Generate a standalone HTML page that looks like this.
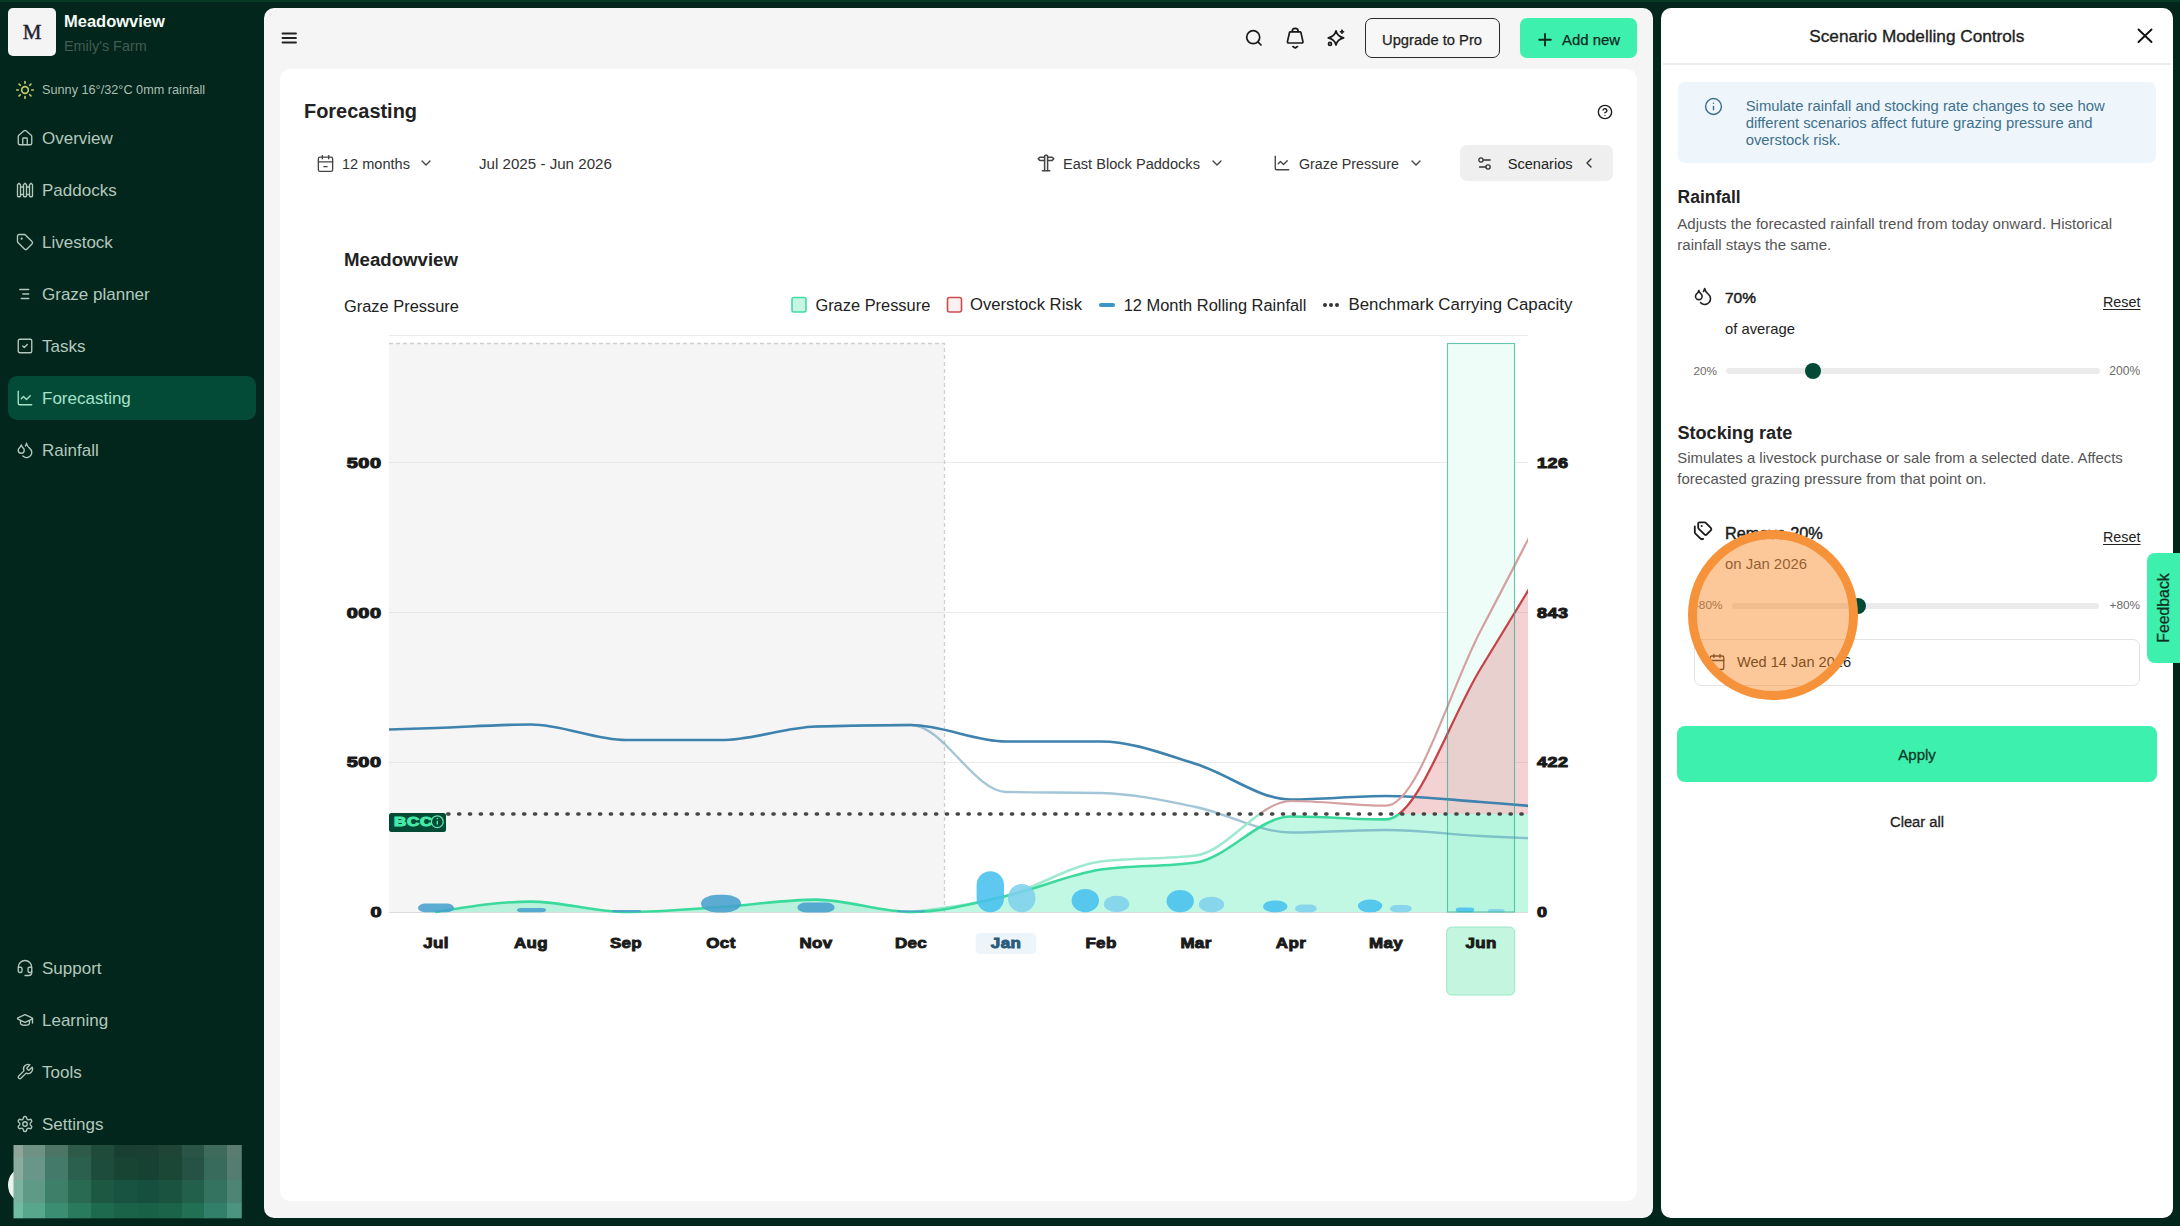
<!DOCTYPE html>
<html><head><meta charset="utf-8">
<style>
*{box-sizing:border-box;margin:0;padding:0}
html,body{width:2180px;height:1226px;overflow:hidden}
body{background:#02261b;font-family:"Liberation Sans",sans-serif;position:relative;color:#1f1f1f}
.a{position:absolute;white-space:nowrap;line-height:1}
svg{position:absolute;overflow:visible}
.nav{color:#b4c8be;font-size:17px}
.ic{stroke:#b4c8be;fill:none;stroke-width:1.5;stroke-linecap:round;stroke-linejoin:round}
.dk{stroke:#222;fill:none;stroke-width:1.7;stroke-linecap:round;stroke-linejoin:round}
</style></head><body>
<div class="a" style="left:0;top:0;width:2180px;height:2px;background:#073a22"></div>

<!-- SIDEBAR -->
<div class="a" style="left:8px;top:8px;width:48px;height:48px;background:#f5f4f4;border-radius:5px"></div>
<div class="a" style="left:8px;top:22px;width:48px;text-align:center;font-family:'Liberation Serif',serif;font-size:21px;color:#1d2030;-webkit-text-stroke:0.4px #1d2030">M</div>
<div class="a" style="left:64px;top:13px;font-size:16.5px;font-weight:bold;color:#f4fbf6">Meadowview</div>
<div class="a" style="left:64px;top:39px;font-size:14.4px;color:#445b51">Emily's Farm</div>
<svg style="left:15px;top:80px" width="20" height="20" viewBox="0 0 24 24"><g stroke="#c9c76a" stroke-width="2" fill="none" stroke-linecap="round"><circle cx="12" cy="12" r="4"/><path d="M12 2v2M12 20v2M4.93 4.93l1.41 1.41M17.66 17.66l1.41 1.41M2 12h2M20 12h2M6.34 17.66l-1.41 1.41M19.07 4.93l-1.41 1.41"/></g></svg>
<div class="a" style="left:42px;top:84px;font-size:12.7px;color:#a9bfb4">Sunny 16°/32°C 0mm rainfall</div>

<div class="a" style="left:8px;top:376px;width:248px;height:44px;background:#034b37;border-radius:9px"></div>

<div class="a nav" style="left:42px;top:130px">Overview</div>
<div class="a nav" style="left:42px;top:182px">Paddocks</div>
<div class="a nav" style="left:42px;top:234px">Livestock</div>
<div class="a nav" style="left:42px;top:286px">Graze planner</div>
<div class="a nav" style="left:42px;top:338px">Tasks</div>
<div class="a nav" style="left:42px;top:390px;color:#a9e2cb">Forecasting</div>
<div class="a nav" style="left:42px;top:442px">Rainfall</div>
<div class="a nav" style="left:42px;top:960px">Support</div>
<div class="a nav" style="left:42px;top:1012px">Learning</div>
<div class="a nav" style="left:42px;top:1064px">Tools</div>
<div class="a nav" style="left:42px;top:1116px">Settings</div>


<!-- sidebar icons -->
<svg style="left:16px;top:128.5px" width="18" height="18" viewBox="0 0 24 24"><g stroke="#b4c8be" fill="none" stroke-width="1.8" stroke-linecap="round" stroke-linejoin="round"><path d="M15 21v-8a1 1 0 0 0-1-1h-4a1 1 0 0 0-1 1v8"/><path d="M3 10a2 2 0 0 1 .709-1.528l7-5.999a2 2 0 0 1 2.582 0l7 5.999A2 2 0 0 1 21 10v9a2 2 0 0 1-2 2H5a2 2 0 0 1-2-2z"/></g></svg>
<svg style="left:16px;top:180.5px" width="18" height="18" viewBox="0 0 24 24"><g stroke="#b4c8be" fill="none" stroke-width="1.8" stroke-linecap="round" stroke-linejoin="round"><path d="M4 3 2 5v15c0 .6.4 1 1 1h2c.6 0 1-.4 1-1V5Z"/><path d="M6 8h4"/><path d="M6 18h4"/><path d="m12 3-2 2v15c0 .6.4 1 1 1h2c.6 0 1-.4 1-1V5Z"/><path d="M14 8h4"/><path d="M14 18h4"/><path d="m20 3-2 2v15c0 .6.4 1 1 1h2c.6 0 1-.4 1-1V5Z"/></g></svg>
<svg style="left:16px;top:232.5px" width="18" height="18" viewBox="0 0 24 24"><g stroke="#b4c8be" fill="none" stroke-width="1.8" stroke-linecap="round" stroke-linejoin="round"><path d="M12.586 2.586A2 2 0 0 0 11.172 2H4a2 2 0 0 0-2 2v7.172a2 2 0 0 0 .586 1.414l8.704 8.704a2.426 2.426 0 0 0 3.42 0l6.58-6.58a2.426 2.426 0 0 0 0-3.42z"/><circle cx="7.5" cy="7.5" r=".6"/></g></svg>
<svg style="left:16px;top:284.5px" width="18" height="18" viewBox="0 0 24 24"><g stroke="#b4c8be" fill="none" stroke-width="1.8" stroke-linecap="round" stroke-linejoin="round"><path d="M5 6h12"/><path d="M9 12h8"/><path d="M7 18h10"/></g></svg>
<svg style="left:16px;top:336.5px" width="18" height="18" viewBox="0 0 24 24"><g stroke="#b4c8be" fill="none" stroke-width="1.8" stroke-linecap="round" stroke-linejoin="round"><rect x="3" y="3" width="18" height="18" rx="2"/><path d="m9 12 2 2 4-4"/></g></svg>
<svg style="left:16px;top:388.5px" width="18" height="18" viewBox="0 0 24 24"><g stroke="#a9e2cb" fill="none" stroke-width="1.8" stroke-linecap="round" stroke-linejoin="round"><path d="M3 3v16a2 2 0 0 0 2 2h16"/><path d="m19 9-5 5-4-4-3 3"/></g></svg>
<svg style="left:16px;top:440.5px" width="18" height="18" viewBox="0 0 24 24"><g stroke="#b4c8be" fill="none" stroke-width="1.8" stroke-linecap="round" stroke-linejoin="round"><path d="M7 16.3c2.2 0 4-1.83 4-4.05 0-1.16-.57-2.26-1.71-3.19S7.290 6.75 7 5.3c-.29 1.45-1.14 2.84-2.29 3.760S3 11.1 3 12.25c0 2.22 1.8 4.05 4 4.05z"/><path d="M12.56 6.6A10.97 10.97 0 0 0 14 3.02c.5 2.5 2 4.9 4 6.5s3 3.5 3 5.5a6.98 6.98 0 0 1-11.91 4.97"/></g></svg>
<svg style="left:16px;top:958.5px" width="18" height="18" viewBox="0 0 24 24"><g stroke="#b4c8be" fill="none" stroke-width="1.8" stroke-linecap="round" stroke-linejoin="round"><path d="M3 11h3a2 2 0 0 1 2 2v3a2 2 0 0 1-2 2H5a2 2 0 0 1-2-2v-5Zm0 0a9 9 0 1 1 18 0m0 0v5a2 2 0 0 1-2 2h-1a2 2 0 0 1-2-2v-3a2 2 0 0 1 2-2h3Z"/><path d="M21 16v2a4 4 0 0 1-4 4h-5"/></g></svg>
<svg style="left:16px;top:1010.5px" width="18" height="18" viewBox="0 0 24 24"><g stroke="#b4c8be" fill="none" stroke-width="1.8" stroke-linecap="round" stroke-linejoin="round"><path d="M21.42 10.922a1 1 0 0 0-.019-1.838L12.83 5.18a2 2 0 0 0-1.66 0L2.6 9.08a1 1 0 0 0 0 1.832l8.57 3.908a2 2 0 0 0 1.66 0z"/><path d="M22 10v6"/><path d="M6 12.5V16a6 3 0 0 0 12 0v-3.5"/></g></svg>
<svg style="left:16px;top:1062.5px" width="18" height="18" viewBox="0 0 24 24"><g stroke="#b4c8be" fill="none" stroke-width="1.8" stroke-linecap="round" stroke-linejoin="round"><path d="M14.7 6.3a1 1 0 0 0 0 1.4l1.6 1.6a1 1 0 0 0 1.4 0l3.77-3.77a6 6 0 0 1-7.94 7.940l-6.91 6.91a2.12 2.12 0 0 1-3-3l6.91-6.91a6 6 0 0 1 7.94-7.94l-3.76 3.76z"/></g></svg>
<svg style="left:16px;top:1114.5px" width="18" height="18" viewBox="0 0 24 24"><g stroke="#b4c8be" fill="none" stroke-width="1.8" stroke-linecap="round" stroke-linejoin="round"><path d="M12.22 2h-.44a2 2 0 0 0-2 2v.18a2 2 0 0 1-1 1.73l-.43.25a2 2 0 0 1-2 0l-.15-.08a2 2 0 0 0-2.730.73l-.22.38a2 2 0 0 0 .73 2.73l.15.1a2 2 0 0 1 1 1.72v.51a2 2 0 0 1-1 1.74l-.15.09a2 2 0 0 0-.73 2.73l.22.38a2 2 0 0 0 2.73.73l.15-.08a2 2 0 0 1 2 0l.43.25a2 2 0 0 1 1 1.73V20a2 2 0 0 0 2 2h.44a2 2 0 0 0 2-2v-.18a2 2 0 0 1 1-1.73l.43-.25a2 2 0 0 1 2 0l.15.08a2 2 0 0 0 2.73-.73l.22-.39a2 2 0 0 0-.73-2.73l-.15-.08a2 2 0 0 1-1-1.74v-.5a2 2 0 0 1 1-1.74l.15-.09a2 2 0 0 0 .73-2.73l-.22-.38a2 2 0 0 0-2.73-.73l-.15.08a2 2 0 0 1-2 0l-.43-.25a2 2 0 0 1-1-1.73V4a2 2 0 0 0-2-2z"/><circle cx="12" cy="12" r="3"/></g></svg>
<div class="a" style="left:8px;top:1168px;width:30px;height:34px;border-radius:50%;background:#eef2ef"></div>
<svg style="left:0;top:0" width="2180" height="1226"><rect x="13.5" y="1145" width="9.8" height="12.3" fill="#8fa59a"/><rect x="23" y="1145" width="22.3" height="12.3" fill="#6d9283"/><rect x="45" y="1145" width="23.3" height="12.3" fill="#4c7566"/><rect x="68" y="1145" width="23.8" height="12.3" fill="#2e5a4a"/><rect x="91.5" y="1145" width="22.8" height="12.3" fill="#1f4b3b"/><rect x="114" y="1145" width="23.3" height="12.3" fill="#193f33"/><rect x="137" y="1145" width="22.3" height="12.3" fill="#1a4034"/><rect x="159" y="1145" width="23.3" height="12.3" fill="#1f4537"/><rect x="182" y="1145" width="22.3" height="12.3" fill="#2a5446"/><rect x="204" y="1145" width="23.3" height="12.3" fill="#3f6b5c"/><rect x="227" y="1145" width="14.8" height="12.3" fill="#5a7d71"/><rect x="13.5" y="1157" width="9.8" height="23.3" fill="#8aab9d"/><rect x="23" y="1157" width="22.3" height="23.3" fill="#68978a"/><rect x="45" y="1157" width="23.3" height="23.3" fill="#437a69"/><rect x="68" y="1157" width="23.8" height="23.3" fill="#2b5f4e"/><rect x="91.5" y="1157" width="22.8" height="23.3" fill="#1e4c3c"/><rect x="114" y="1157" width="23.3" height="23.3" fill="#184434"/><rect x="137" y="1157" width="22.3" height="23.3" fill="#174233"/><rect x="159" y="1157" width="23.3" height="23.3" fill="#1b4737"/><rect x="182" y="1157" width="22.3" height="23.3" fill="#255244"/><rect x="204" y="1157" width="23.3" height="23.3" fill="#386b5b"/><rect x="227" y="1157" width="14.8" height="23.3" fill="#547c70"/><rect x="13.5" y="1180" width="9.8" height="23.3" fill="#7cb2a0"/><rect x="23" y="1180" width="22.3" height="23.3" fill="#5f9a86"/><rect x="45" y="1180" width="23.3" height="23.3" fill="#3e7f69"/><rect x="68" y="1180" width="23.8" height="23.3" fill="#2a6a53"/><rect x="91.5" y="1180" width="22.8" height="23.3" fill="#1d5843"/><rect x="114" y="1180" width="23.3" height="23.3" fill="#185240"/><rect x="137" y="1180" width="22.3" height="23.3" fill="#174f3e"/><rect x="159" y="1180" width="23.3" height="23.3" fill="#1a5441"/><rect x="182" y="1180" width="22.3" height="23.3" fill="#22604b"/><rect x="204" y="1180" width="23.3" height="23.3" fill="#337360"/><rect x="227" y="1180" width="14.8" height="23.3" fill="#4d8474"/><rect x="13.5" y="1203" width="9.8" height="15.3" fill="#6fbca3"/><rect x="23" y="1203" width="22.3" height="15.3" fill="#58a68c"/><rect x="45" y="1203" width="23.3" height="15.3" fill="#3b8e72"/><rect x="68" y="1203" width="23.8" height="15.3" fill="#2a7a5d"/><rect x="91.5" y="1203" width="22.8" height="15.3" fill="#1e6a4f"/><rect x="114" y="1203" width="23.3" height="15.3" fill="#1a6248"/><rect x="137" y="1203" width="22.3" height="15.3" fill="#186046"/><rect x="159" y="1203" width="23.3" height="15.3" fill="#1b6449"/><rect x="182" y="1203" width="22.3" height="15.3" fill="#227054"/><rect x="204" y="1203" width="23.3" height="15.3" fill="#32806a"/><rect x="227" y="1203" width="14.8" height="15.3" fill="#4a9480"/></svg>

<!-- MAIN PANEL -->
<div class="a" style="left:264px;top:8px;width:1389px;height:1210px;background:#f5f5f5;border-radius:10px"></div>
<div class="a" style="left:280px;top:69px;width:1357px;height:1132px;background:#fff;border-radius:10px"></div>

<!-- CHART_START -->
<div class="a" style="left:344px;top:250.8px;font-size:18.65px;font-weight:bold;color:#222">Meadowview</div>
<div class="a" style="left:344px;top:297.6px;font-size:16.42px;color:#222">Graze Pressure</div>
<div class="a" style="left:815.4px;top:297.4px;font-size:16.42px;color:#222">Graze Pressure</div>
<div class="a" style="left:970px;top:297.2px;font-size:16.66px;color:#222">Overstock Risk</div>
<div class="a" style="left:1123.7px;top:297.4px;font-size:16.46px;color:#222">12 Month Rolling Rainfall</div>
<div class="a" style="left:1348.4px;top:297.0px;font-size:16.86px;color:#222">Benchmark Carrying Capacity</div>
<svg style="left:0;top:0" width="2180" height="1226">
<defs><clipPath id="plot"><rect x="389" y="300" width="1139" height="620"/></clipPath><clipPath id="below"><rect x="380" y="814" width="1160" height="110"/></clipPath><clipPath id="above"><rect x="380" y="300" width="1160" height="514"/></clipPath></defs>
<rect x="792" y="297.5" width="14" height="14.5" rx="2" fill="#c6f6e1" stroke="#3fdca3" stroke-width="1.6"/><rect x="947.5" y="297.5" width="14" height="14.5" rx="2" fill="#fdf0f0" stroke="#c94b4f" stroke-width="1.6"/><path d="M1101 305h12" stroke="#3d95c6" stroke-width="4.2" stroke-linecap="round"/><g fill="#333"><circle cx="1325" cy="305" r="2"/><circle cx="1331" cy="305" r="2"/><circle cx="1337" cy="305" r="2"/></g>
<path d="M389 335.5H1528" stroke="#ebebeb" stroke-width="1"/><path d="M389 462.5H1528" stroke="#ebebeb" stroke-width="1"/><path d="M389 612.5H1528" stroke="#ebebeb" stroke-width="1"/><path d="M389 762.5H1528" stroke="#ebebeb" stroke-width="1"/><rect x="389" y="343" width="555" height="569" fill="#f5f5f5"/><path d="M389 343.5H944.5V912" fill="none" stroke="#cfcfcf" stroke-width="1.3" stroke-dasharray="4 3"/><path d="M389 462.5H944" stroke="#e6e6e6" stroke-width="1"/><path d="M389 612.5H944" stroke="#e6e6e6" stroke-width="1"/><path d="M389 762.5H944" stroke="#e6e6e6" stroke-width="1"/><rect x="1447.5" y="343.5" width="67" height="568.5" fill="#effdf8"/>
<g clip-path="url(#plot)"><g clip-path="url(#below)"><path d="M436.0,912.0 C467.7,906.8 499.3,901.6 531.0,901.6 C562.7,901.6 594.3,912.0 626.0,912.0 C657.7,912.0 689.3,909.1 721.0,907.0 C752.7,904.9 784.3,899.6 816.0,899.6 C847.7,899.6 879.3,912.0 911.0,912.0 C942.7,912.0 974.3,903.1 1006.0,896.0 C1037.7,888.9 1069.3,874.2 1101.0,869.5 C1132.7,864.8 1164.3,867.2 1196.0,862.5 C1227.7,857.8 1259.3,816.5 1291.0,816.5 C1322.7,816.5 1354.3,819.4 1386.0,819.4 C1417.7,819.4 1449.3,719.2 1481.0,668.0 C1512.7,616.8 1544.3,564.4 1576.0,512.0 L1576,912 L436,912Z" fill="rgba(62,232,170,0.32)"/></g><g clip-path="url(#above)"><path d="M436.0,912.0 C467.7,906.8 499.3,901.6 531.0,901.6 C562.7,901.6 594.3,912.0 626.0,912.0 C657.7,912.0 689.3,909.1 721.0,907.0 C752.7,904.9 784.3,899.6 816.0,899.6 C847.7,899.6 879.3,912.0 911.0,912.0 C942.7,912.0 974.3,903.1 1006.0,896.0 C1037.7,888.9 1069.3,874.2 1101.0,869.5 C1132.7,864.8 1164.3,867.2 1196.0,862.5 C1227.7,857.8 1259.3,816.5 1291.0,816.5 C1322.7,816.5 1354.3,819.4 1386.0,819.4 C1417.7,819.4 1449.3,719.2 1481.0,668.0 C1512.7,616.8 1544.3,564.4 1576.0,512.0 L1576,912 L436,912Z" fill="rgba(210,75,85,0.25)"/></g></g>
<path d="M389 912.5H1528" stroke="#dcdcdc" stroke-width="1"/><g clip-path="url(#plot)" fill="none" stroke-linecap="round" stroke-linejoin="round"><path d="M816.0,726.5 C847.7,725.8 879.3,725.0 911.0,725.0 C942.7,725.0 974.3,791.3 1006.0,792.0 C1037.7,792.7 1069.3,792.3 1101.0,793.0 C1132.7,793.7 1164.3,800.4 1196.0,807.0 C1227.7,813.6 1259.3,832.5 1291.0,832.5 C1322.7,832.5 1354.3,830.0 1386.0,830.0 C1417.7,830.0 1449.3,834.3 1481.0,836.0 C1512.7,837.7 1544.3,838.8 1576.0,840.0" stroke="rgba(70,140,175,0.5)" stroke-width="2.3"/><path d="M341.0,731.0 C372.7,730.0 404.3,729.1 436.0,728.0 C467.7,726.9 499.3,724.5 531.0,724.5 C562.7,724.5 594.3,740.0 626.0,740.0 C657.7,740.0 689.3,740.0 721.0,740.0 C752.7,740.0 784.3,727.5 816.0,726.5 C847.7,725.5 879.3,725.0 911.0,725.0 C942.7,725.0 974.3,741.5 1006.0,741.5 C1037.7,741.5 1069.3,741.5 1101.0,741.5 C1132.7,741.5 1164.3,754.3 1196.0,764.0 C1227.7,773.7 1259.3,799.5 1291.0,799.5 C1322.7,799.5 1354.3,796.0 1386.0,796.0 C1417.7,796.0 1449.3,799.7 1481.0,802.0 C1512.7,804.3 1544.3,807.2 1576.0,810.0" stroke="#3d83ad" stroke-width="2.7"/><g clip-path="url(#below)"><path d="M911.0,912.0 C942.7,908.2 974.3,904.4 1006.0,896.0 C1037.7,887.6 1069.3,865.5 1101.0,861.5 C1132.7,857.5 1164.3,859.5 1196.0,855.5 C1227.7,851.5 1259.3,801.0 1291.0,801.0 C1322.7,801.0 1354.3,805.7 1386.0,805.7 C1417.7,805.7 1449.3,690.0 1481.0,630.0 C1512.7,570.0 1544.3,508.0 1576.0,446.0" stroke="#9eead0" stroke-width="2.6"/><path d="M436.0,912.0 C467.7,906.8 499.3,901.6 531.0,901.6 C562.7,901.6 594.3,912.0 626.0,912.0 C657.7,912.0 689.3,909.1 721.0,907.0 C752.7,904.9 784.3,899.6 816.0,899.6 C847.7,899.6 879.3,912.0 911.0,912.0 C942.7,912.0 974.3,903.1 1006.0,896.0 C1037.7,888.9 1069.3,874.2 1101.0,869.5 C1132.7,864.8 1164.3,867.2 1196.0,862.5 C1227.7,857.8 1259.3,816.5 1291.0,816.5 C1322.7,816.5 1354.3,819.4 1386.0,819.4 C1417.7,819.4 1449.3,719.2 1481.0,668.0 C1512.7,616.8 1544.3,564.4 1576.0,512.0" stroke="#3ad99c" stroke-width="2.6"/></g><g clip-path="url(#above)"><path d="M911.0,912.0 C942.7,908.2 974.3,904.4 1006.0,896.0 C1037.7,887.6 1069.3,865.5 1101.0,861.5 C1132.7,857.5 1164.3,859.5 1196.0,855.5 C1227.7,851.5 1259.3,801.0 1291.0,801.0 C1322.7,801.0 1354.3,805.7 1386.0,805.7 C1417.7,805.7 1449.3,690.0 1481.0,630.0 C1512.7,570.0 1544.3,508.0 1576.0,446.0" stroke="#d5a0a2" stroke-width="2.2"/><path d="M436.0,912.0 C467.7,906.8 499.3,901.6 531.0,901.6 C562.7,901.6 594.3,912.0 626.0,912.0 C657.7,912.0 689.3,909.1 721.0,907.0 C752.7,904.9 784.3,899.6 816.0,899.6 C847.7,899.6 879.3,912.0 911.0,912.0 C942.7,912.0 974.3,903.1 1006.0,896.0 C1037.7,888.9 1069.3,874.2 1101.0,869.5 C1132.7,864.8 1164.3,867.2 1196.0,862.5 C1227.7,857.8 1259.3,816.5 1291.0,816.5 C1322.7,816.5 1354.3,819.4 1386.0,819.4 C1417.7,819.4 1449.3,719.2 1481.0,668.0 C1512.7,616.8 1544.3,564.4 1576.0,512.0" stroke="#c6434a" stroke-width="2.3"/></g></g>
<rect x="418" y="903.6" width="36.0" height="8.6" rx="7.7" ry="4.3" fill="#45a0cd" fill-opacity="0.88"/><rect x="517" y="908" width="29.0" height="4.2" rx="3.8" ry="2.1" fill="#45a0cd" fill-opacity="0.88"/><rect x="612" y="910" width="29.0" height="2.2" rx="2.0" ry="1.1" fill="#45a0cd" fill-opacity="0.88"/><rect x="701" y="894.8" width="40.0" height="17.6" rx="15.8" ry="8.8" fill="#45a0cd" fill-opacity="0.88"/><rect x="797.4" y="902.6" width="37.2" height="9.8" rx="8.8" ry="4.9" fill="#45a0cd" fill-opacity="0.88"/><rect x="897" y="910.5" width="28.0" height="1.8" rx="1.6" ry="0.9" fill="#45a0cd" fill-opacity="0.88"/><rect x="976.6" y="871.3" width="27.4" height="41.0" rx="13.7" ry="13.7" fill="#48c0ee" fill-opacity="0.88"/><rect x="1071.6" y="888.9" width="27.4" height="23.4" rx="13.7" ry="11.7" fill="#48c0ee" fill-opacity="0.88"/><rect x="1166.5" y="889.9" width="27.4" height="22.4" rx="13.7" ry="11.2" fill="#48c0ee" fill-opacity="0.88"/><rect x="1263" y="900.6" width="24.4" height="11.7" rx="10.5" ry="5.8" fill="#48c0ee" fill-opacity="0.88"/><rect x="1357.9" y="899.6" width="24.4" height="12.7" rx="11.4" ry="6.3" fill="#48c0ee" fill-opacity="0.88"/><rect x="1455.7" y="907.5" width="18.6" height="4.8" rx="4.3" ry="2.4" fill="#48c0ee" fill-opacity="0.88"/><rect x="1008" y="884" width="27.4" height="28.3" rx="13.7" ry="13.7" fill="#7fd0ed" fill-opacity="0.88"/><rect x="1103.9" y="895.7" width="25.4" height="16.6" rx="12.7" ry="8.3" fill="#7fd0ed" fill-opacity="0.88"/><rect x="1198.8" y="896.7" width="25.4" height="15.6" rx="12.7" ry="7.8" fill="#7fd0ed" fill-opacity="0.88"/><rect x="1295" y="904.5" width="21.8" height="7.8" rx="7.0" ry="3.9" fill="#7fd0ed" fill-opacity="0.88"/><rect x="1390" y="905" width="21.7" height="7.3" rx="6.6" ry="3.6" fill="#7fd0ed" fill-opacity="0.88"/><rect x="1488" y="909" width="16.7" height="3.3" rx="3.0" ry="1.6" fill="#7fd0ed" fill-opacity="0.88"/>
<path d="M447.7 814H1528" stroke="#454545" stroke-width="3.4" stroke-dasharray="1.3 9.54" stroke-linecap="round"/>
<rect x="1447.5" y="343.5" width="67" height="568.5" fill="none" stroke="rgba(40,175,145,0.7)" stroke-width="1.1"/>
<rect x="389" y="813" width="57" height="19" rx="2.5" fill="#034a34"/><rect x="975.7" y="933" width="60.5" height="21" rx="4" fill="#eef5fa"/><rect x="1446.7" y="927" width="68" height="68" rx="5" fill="#c4f6df" stroke="#9ae6c8" stroke-width="1"/>
</svg>
<div class="a" style="right:1798px;top:455.8px;font-size:14px;font-weight:bold;color:#1a1a1a;-webkit-text-stroke:1px #1a1a1a;letter-spacing:0.4px;transform:scaleX(1.42);transform-origin:100% 50%">500</div>
<div class="a" style="right:1798px;top:605.8px;font-size:14px;font-weight:bold;color:#1a1a1a;-webkit-text-stroke:1px #1a1a1a;letter-spacing:0.4px;transform:scaleX(1.42);transform-origin:100% 50%">000</div>
<div class="a" style="right:1798px;top:755.3px;font-size:14px;font-weight:bold;color:#1a1a1a;-webkit-text-stroke:1px #1a1a1a;letter-spacing:0.4px;transform:scaleX(1.42);transform-origin:100% 50%">500</div>
<div class="a" style="right:1798px;top:905.3px;font-size:14px;font-weight:bold;color:#1a1a1a;-webkit-text-stroke:1px #1a1a1a;letter-spacing:0.4px;transform:scaleX(1.42);transform-origin:100% 50%">0</div>
<div class="a" style="left:1537px;top:455.8px;font-size:14px;font-weight:bold;color:#1a1a1a;-webkit-text-stroke:1px #1a1a1a;letter-spacing:0.4px;transform:scaleX(1.28);transform-origin:0 50%">126</div>
<div class="a" style="left:1537px;top:605.8px;font-size:14px;font-weight:bold;color:#1a1a1a;-webkit-text-stroke:1px #1a1a1a;letter-spacing:0.4px;transform:scaleX(1.28);transform-origin:0 50%">843</div>
<div class="a" style="left:1537px;top:755.3px;font-size:14px;font-weight:bold;color:#1a1a1a;-webkit-text-stroke:1px #1a1a1a;letter-spacing:0.4px;transform:scaleX(1.28);transform-origin:0 50%">422</div>
<div class="a" style="left:1537px;top:905.3px;font-size:14px;font-weight:bold;color:#1a1a1a;-webkit-text-stroke:1px #1a1a1a;letter-spacing:0.4px;transform:scaleX(1.28);transform-origin:0 50%">0</div>
<div class="a" style="left:396px;width:80px;text-align:center;top:935.6px;font-size:14.5px;font-weight:bold;color:#1a1a1a;-webkit-text-stroke:0.9px #1a1a1a;letter-spacing:0.3px;transform:scaleX(1.17)">Jul</div>
<div class="a" style="left:491px;width:80px;text-align:center;top:935.6px;font-size:14.5px;font-weight:bold;color:#1a1a1a;-webkit-text-stroke:0.9px #1a1a1a;letter-spacing:0.3px;transform:scaleX(1.17)">Aug</div>
<div class="a" style="left:586px;width:80px;text-align:center;top:935.6px;font-size:14.5px;font-weight:bold;color:#1a1a1a;-webkit-text-stroke:0.9px #1a1a1a;letter-spacing:0.3px;transform:scaleX(1.17)">Sep</div>
<div class="a" style="left:681px;width:80px;text-align:center;top:935.6px;font-size:14.5px;font-weight:bold;color:#1a1a1a;-webkit-text-stroke:0.9px #1a1a1a;letter-spacing:0.3px;transform:scaleX(1.17)">Oct</div>
<div class="a" style="left:776px;width:80px;text-align:center;top:935.6px;font-size:14.5px;font-weight:bold;color:#1a1a1a;-webkit-text-stroke:0.9px #1a1a1a;letter-spacing:0.3px;transform:scaleX(1.17)">Nov</div>
<div class="a" style="left:871px;width:80px;text-align:center;top:935.6px;font-size:14.5px;font-weight:bold;color:#1a1a1a;-webkit-text-stroke:0.9px #1a1a1a;letter-spacing:0.3px;transform:scaleX(1.17)">Dec</div>
<div class="a" style="left:966px;width:80px;text-align:center;top:935.6px;font-size:14.5px;font-weight:bold;color:#2b5c7c;-webkit-text-stroke:0.9px #2b5c7c;letter-spacing:0.3px;transform:scaleX(1.17)">Jan</div>
<div class="a" style="left:1061px;width:80px;text-align:center;top:935.6px;font-size:14.5px;font-weight:bold;color:#1a1a1a;-webkit-text-stroke:0.9px #1a1a1a;letter-spacing:0.3px;transform:scaleX(1.17)">Feb</div>
<div class="a" style="left:1156px;width:80px;text-align:center;top:935.6px;font-size:14.5px;font-weight:bold;color:#1a1a1a;-webkit-text-stroke:0.9px #1a1a1a;letter-spacing:0.3px;transform:scaleX(1.17)">Mar</div>
<div class="a" style="left:1251px;width:80px;text-align:center;top:935.6px;font-size:14.5px;font-weight:bold;color:#1a1a1a;-webkit-text-stroke:0.9px #1a1a1a;letter-spacing:0.3px;transform:scaleX(1.17)">Apr</div>
<div class="a" style="left:1346px;width:80px;text-align:center;top:935.6px;font-size:14.5px;font-weight:bold;color:#1a1a1a;-webkit-text-stroke:0.9px #1a1a1a;letter-spacing:0.3px;transform:scaleX(1.17)">May</div>
<div class="a" style="left:1441px;width:80px;text-align:center;top:935.6px;font-size:14.5px;font-weight:bold;color:#1a1a1a;-webkit-text-stroke:0.9px #1a1a1a;letter-spacing:0.3px;transform:scaleX(1.17)">Jun</div>
<div class="a" style="left:393.5px;top:814.7px;font-size:13px;font-weight:bold;color:#45eaaa;-webkit-text-stroke:1.1px #45eaaa;letter-spacing:0.6px;transform:scaleX(1.3);transform-origin:0 50%">BCC</div>
<svg style="left:0;top:0" width="2180" height="1226"><circle cx="437.3" cy="821.7" r="5.9" fill="#034a34" stroke="#5fe3b3" stroke-width="1.3"/><path d="M437.3 820.8v3.6" stroke="#5fe3b3" stroke-width="1.4"/><circle cx="437.3" cy="818.6" r="0.8" fill="#5fe3b3"/></svg>
<!-- CHART_END -->

<!-- RIGHT PANEL -->
<div class="a" style="left:1661px;top:8px;width:512px;height:1210px;background:#fff;border-radius:10px"></div>
<div class="a" style="left:1663px;top:63px;width:508px;height:2px;background:#ececec"></div>


<!-- TOPBAR -->
<svg style="left:0;top:0" width="2180" height="1226"><g stroke="#222" stroke-width="1.8" stroke-linecap="round"><path d="M282.5 33.5h13.5M282.5 38h13.5M282.5 42.5h13.5"/></g></svg>
<svg style="left:0;top:0" width="2180" height="1226"><g stroke="#1a1a1a" fill="none" stroke-width="1.7" stroke-linecap="round" stroke-linejoin="round"><circle cx="1253.2" cy="37.2" r="6.5"/><path d="M1257.9 41.9L1261 45"/><path d="M1292.2 31.6Q1292.2 28.3 1295.2 28.3Q1298.2 28.3 1298.2 31.6"/><path d="M1290.4 31.8H1300Q1300.7 31.8 1300.9 32.5L1302.9 41.4Q1303.2 43 1301.6 43H1288.8Q1287.2 43 1287.5 41.4L1289.5 32.5Q1289.7 31.8 1290.4 31.8Z"/><path d="M1292.9 46.6L1295.2 48L1297.5 46.6"/><path d="M1336 30.8Q1337.4 36.5 1343.6 37.9Q1337.4 39.3 1336 45Q1334.6 39.3 1328.3 37.9Q1334.6 36.5 1336 30.8Z"/><circle cx="1330" cy="43.9" r="1.5"/></g><path d="M1342 29.6Q1342.35 31.45 1344.2 31.8Q1342.35 32.15 1342 34Q1341.65 32.15 1339.8 31.8Q1341.65 31.45 1342 29.6Z" fill="#1a1a1a" stroke="#1a1a1a" stroke-width="0.8" stroke-linejoin="round"/></svg>
<div class="a" style="left:1365px;top:18px;width:135px;height:40px;border:1.3px solid #2a2a2a;border-radius:7px;background:#f7f7f7"></div>
<div class="a" style="left:1382px;top:32.6px;font-size:14.75px;color:#1e1e1e;-webkit-text-stroke:0.25px #1e1e1e">Upgrade to Pro</div>
<div class="a" style="left:1520px;top:18px;width:117px;height:40px;border-radius:7px;background:#3ef0ae"></div>
<svg style="left:0;top:0" width="2180" height="1226"><g stroke="#0d2a1e" stroke-width="1.9" stroke-linecap="round"><path d="M1545 34v11.5M1539.3 39.7h11.5"/></g></svg>
<div class="a" style="left:1562px;top:32.5px;font-size:14.9px;color:#0d2a1e;-webkit-text-stroke:0.25px #0d2a1e">Add new</div>

<!-- CARD HEADER -->
<div class="a" style="left:304px;top:101.9px;font-size:19.94px;font-weight:bold;color:#222">Forecasting</div>
<svg style="left:1596.8px;top:103.5px" width="16" height="16" viewBox="0 0 24 24"><g stroke="#1e1e1e" fill="none" stroke-width="2.1" stroke-linecap="round" stroke-linejoin="round" ><circle cx="12" cy="12" r="10"/><path d="M9.09 9a3 3 0 0 1 5.83 1c0 2-3 3-3 3"/><path d="M12 17h.01"/></g></svg>
<svg style="left:315.5px;top:153.5px" width="19" height="19" viewBox="0 0 24 24"><g stroke="#444" fill="none" stroke-width="1.7" stroke-linecap="round" stroke-linejoin="round" ><path d="M8 2v4"/><path d="M16 2v4"/><rect width="18" height="18" x="3" y="4" rx="2"/><path d="M3 10h18"/><path d="M10 16h4"/></g></svg>
<div class="a" style="left:342px;top:156.5px;font-size:14.56px;color:#333">12 months</div>
<svg style="left:418.0px;top:154.5px" width="16" height="16" viewBox="0 0 24 24"><g stroke="#444" fill="none" stroke-width="2" stroke-linecap="round" stroke-linejoin="round" ><path d="m6 9 6 6 6-6"/></g></svg>
<div class="a" style="left:479px;top:156.2px;font-size:15.14px;color:#333">Jul 2025 - Jun 2026</div>
<svg style="left:0;top:0" width="2180" height="1226"><g stroke="#444" fill="none" stroke-width="1.5" stroke-linecap="round" stroke-linejoin="round"><path d="M1044.6 170.6V156.3Q1044.6 155.3 1045.6 155.3H1046.6Q1047.6 155.3 1047.6 156.3V170.6"/><path d="M1044.6 157.2H1039.8L1038.2 158.8L1039.8 160.4H1044.6"/><path d="M1047.6 157.2H1052.2L1053.8 158.8L1052.2 160.4H1047.6"/><path d="M1042.4 170.7H1049.8"/></g></svg>
<div class="a" style="left:1063px;top:156.5px;font-size:14.58px;color:#333">East Block Paddocks</div>
<svg style="left:1209.0px;top:154.5px" width="16" height="16" viewBox="0 0 24 24"><g stroke="#444" fill="none" stroke-width="2" stroke-linecap="round" stroke-linejoin="round" ><path d="m6 9 6 6 6-6"/></g></svg>
<svg style="left:1272.5px;top:154.0px" width="18" height="18" viewBox="0 0 24 24"><g stroke="#444" fill="none" stroke-width="1.8" stroke-linecap="round" stroke-linejoin="round" ><path d="M3 3v16a2 2 0 0 0 2 2h16"/><path d="m19 9-5 5-4-4-3 3"/></g></svg>
<div class="a" style="left:1299px;top:156.6px;font-size:14.28px;color:#333">Graze Pressure</div>
<svg style="left:1407.5px;top:154.5px" width="16" height="16" viewBox="0 0 24 24"><g stroke="#444" fill="none" stroke-width="2" stroke-linecap="round" stroke-linejoin="round" ><path d="m6 9 6 6 6-6"/></g></svg>
<div class="a" style="left:1460px;top:145px;width:153px;height:36px;border-radius:7px;background:#efefef"></div>
<svg style="left:1475.5px;top:154.5px" width="17" height="17" viewBox="0 0 24 24"><g stroke="#333" fill="none" stroke-width="1.9" stroke-linecap="round" stroke-linejoin="round" ><path d="M20 7h-9"/><path d="M14 17H5"/><circle cx="17" cy="17" r="3"/><circle cx="7" cy="7" r="3"/></g></svg>
<div class="a" style="left:1507.7px;top:156.5px;font-size:14.62px;color:#222">Scenarios</div>
<svg style="left:1581.0px;top:155.0px" width="16" height="16" viewBox="0 0 24 24"><g stroke="#333" fill="none" stroke-width="2" stroke-linecap="round" stroke-linejoin="round" ><path d="m15 18-6-6 6-6"/></g></svg>

<!-- RIGHT PANEL CONTENT -->
<div class="a" style="left:1809.3px;top:27.7px;font-size:17.19px;color:#1e1e1e;-webkit-text-stroke:0.35px #1e1e1e">Scenario Modelling Controls</div>
<svg style="left:0;top:0" width="2180" height="1226"><g stroke="#111" stroke-width="1.9" stroke-linecap="round"><path d="M2138.5 29.5l13 12.5M2151.5 29.5l-13 12.5"/></g></svg>
<div class="a" style="left:1678px;top:82px;width:478px;height:81px;border-radius:7px;background:#eef6fc"></div>
<svg style="left:1703.5px;top:96.5px" width="19" height="19" viewBox="0 0 24 24"><g stroke="#3f6f8a" fill="none" stroke-width="1.8" stroke-linecap="round" stroke-linejoin="round" ><circle cx="12" cy="12" r="10"/><path d="M12 16v-4"/><path d="M12 8h.01"/></g></svg>
<div class="a" style="left:1745.7px;top:98.7px;font-size:14.85px;color:#40708a">Simulate rainfall and stocking rate changes to see how</div>
<div class="a" style="left:1745.7px;top:115.7px;font-size:14.85px;color:#40708a">different scenarios affect future grazing pressure and</div>
<div class="a" style="left:1745.7px;top:132.7px;font-size:14.85px;color:#40708a">overstock risk.</div>
<div class="a" style="left:1677.6px;top:189.4px;font-size:17.44px;font-weight:bold;color:#222">Rainfall</div>
<div class="a" style="left:1677.3px;top:215.6px;font-size:15.05px;color:#555">Adjusts the forecasted rainfall trend from today onward. Historical</div>
<div class="a" style="left:1677.3px;top:236.6px;font-size:15.05px;color:#555">rainfall stays the same.</div>
<svg style="left:1693px;top:286px" width="20" height="20" viewBox="0 0 24 24"><g stroke="#222" fill="none" stroke-width="1.9" stroke-linecap="round" stroke-linejoin="round" ><path d="M7 16.3c2.2 0 4-1.83 4-4.05 0-1.16-.57-2.26-1.71-3.19S7.29 6.75 7 5.3c-.29 1.45-1.14 2.84-2.29 3.76S3 11.1 3 12.25c0 2.22 1.8 4.05 4 4.05z"/><path d="M12.56 6.6A10.97 10.97 0 0 0 14 3.02c.5 2.5 2 4.9 4 6.5s3 3.5 3 5.5a6.98 6.98 0 0 1-11.91 4.97"/></g></svg>
<div class="a" style="left:1725px;top:290.2px;font-size:15.5px;color:#1a1a1a;-webkit-text-stroke:0.45px #1a1a1a">70%</div>
<div class="a" style="left:1725px;top:321.9px;font-size:14.8px;color:#222">of average</div>
<div class="a" style="left:2103px;top:295.1px;font-size:14.35px;color:#222;text-decoration:underline;text-underline-offset:2px">Reset</div>
<div class="a" style="left:1693.4px;top:365.3px;font-size:11.74px;color:#6a6a6a">20%</div>
<div class="a" style="left:2109.2px;top:365.2px;font-size:12.12px;color:#6a6a6a">200%</div>
<div class="a" style="left:1726px;top:368px;width:374px;height:6px;border-radius:3px;background:#ebebeb"></div>
<div class="a" style="left:1805px;top:363px;width:16px;height:16px;border-radius:50%;background:#034a36"></div>
<div class="a" style="left:1677.4px;top:424.0px;font-size:18.15px;font-weight:bold;color:#222">Stocking rate</div>
<div class="a" style="left:1677.3px;top:450.7px;font-size:14.92px;color:#555">Simulates a livestock purchase or sale from a selected date. Affects</div>
<div class="a" style="left:1677.3px;top:471.7px;font-size:14.92px;color:#555">forecasted grazing pressure from that point on.</div>
<svg style="left:0;top:0" width="2180" height="1226"><g stroke="#1a1a1a" fill="none" stroke-width="1.8" stroke-linecap="round" stroke-linejoin="round"><path d="M1698.2 523.5Q1698.2 522.3 1699.4 522.3H1704.4Q1705.2 522.3 1705.8 522.9L1711 528.2Q1711.8 529.2 1711 530.1L1706.6 534.6Q1705.6 535.5 1704.7 534.6L1698.8 528.8Q1698.2 528.2 1698.2 527.4Z"/><path d="M1694.8 526.5V532.2Q1694.8 533 1695.4 533.6L1700.8 538.8Q1701.5 539.4 1702.4 539.2L1703.2 538.9"/></g><circle cx="1701.6" cy="526.1" r="1" fill="#1a1a1a"/></svg>
<div class="a" style="left:1725px;top:525.1px;font-size:16.3px;color:#1a1a1a;-webkit-text-stroke:0.45px #1a1a1a">Remove 20%</div>
<div class="a" style="left:2103px;top:530.1px;font-size:14.35px;color:#222;text-decoration:underline;text-underline-offset:2px">Reset</div>
<div class="a" style="left:1725px;top:556.8px;font-size:14.9px;color:#444">on Jan 2026</div>
<div class="a" style="left:1694.9px;top:599.8px;font-size:11.8px;color:#6a6a6a">-80%</div>
<div class="a" style="left:2109.5px;top:599.8px;font-size:11.8px;color:#6a6a6a">+80%</div>
<div class="a" style="left:1732px;top:602.5px;width:367px;height:6px;border-radius:3px;background:#ebebeb"></div>
<div class="a" style="left:1849.5px;top:597.5px;width:16px;height:16px;border-radius:50%;background:#034a36"></div>
<div class="a" style="left:1694px;top:639px;width:446px;height:47px;border-radius:7px;border:1.3px solid #e4e4e4;background:#fff"></div>
<svg style="left:1707.5px;top:653.0px" width="18" height="18" viewBox="0 0 24 24"><g stroke="#333" fill="none" stroke-width="1.8" stroke-linecap="round" stroke-linejoin="round" ><path d="M8 2v4"/><path d="M16 2v4"/><rect width="18" height="18" x="3" y="4" rx="2"/><path d="M3 10h18"/></g></svg>
<div class="a" style="left:1737px;top:655.0px;font-size:14.58px;color:#222">Wed 14 Jan 2026</div>
<div class="a" style="left:1677px;top:726px;width:480px;height:56px;border-radius:8px;background:#3ef0ae"></div>
<div class="a" style="left:1898.3px;top:747.3px;font-size:15px;color:#0b3826;-webkit-text-stroke:0.3px #0b3826">Apply</div>
<div class="a" style="left:1890px;top:814.9px;font-size:14.72px;color:#1e1e1e;-webkit-text-stroke:0.3px #1e1e1e">Clear all</div>
<div class="a" style="left:2147px;top:553px;width:40px;height:110px;border-radius:8px;background:#3ef0ae"></div>
<div class="a" style="left:2164px;top:608px;font-size:15.8px;color:#0b2f20;transform:translate(-50%,-50%) rotate(-90deg);-webkit-text-stroke:0.25px #0d2a1e">Feedback</div>

<!-- ORANGE CIRCLE -->
<div class="a" style="left:1688px;top:530px;width:170px;height:170px;border-radius:50%;border:9px solid #f6933a;background:rgba(248,133,29,0.45)"></div>
</body></html>
